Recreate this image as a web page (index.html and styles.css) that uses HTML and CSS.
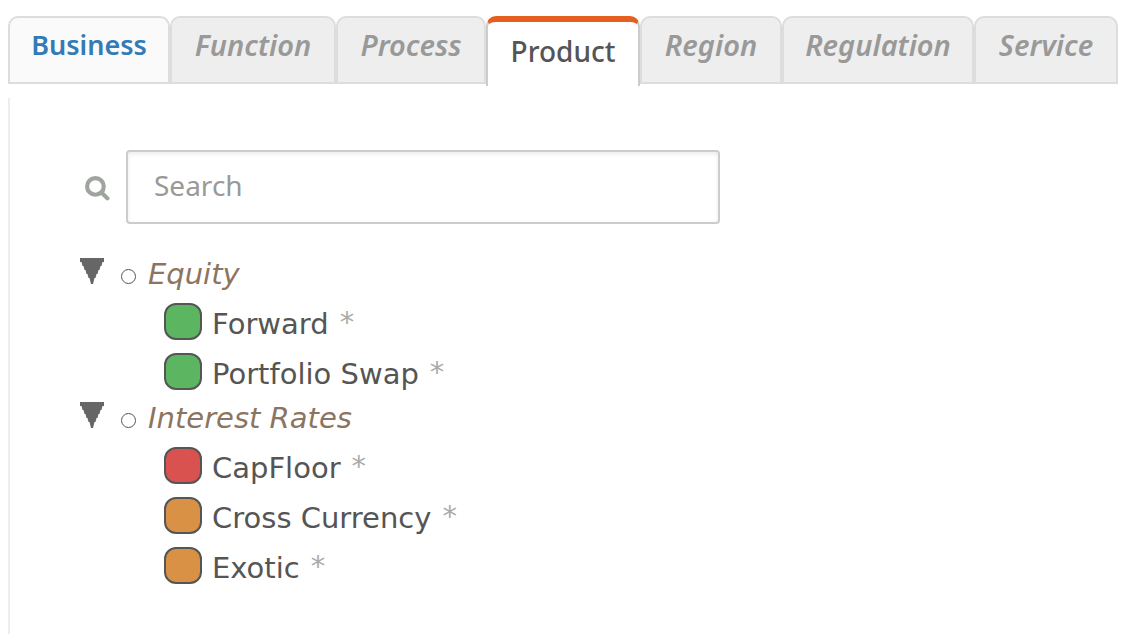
FILE: index.html
```html
<!DOCTYPE html>
<html lang="en">
<head>
<meta charset="utf-8">
<title>Product</title>
<link rel="stylesheet" href="styles.css">
</head>
<body>
<nav class="tabs">
  <a class="tab tab-link" href="#business">Business</a>
  <a class="tab" href="#function">Function</a>
  <a class="tab" href="#process">Process</a>
  <a class="tab tab-active" href="#product" aria-current="page">Product</a>
  <a class="tab" href="#region">Region</a>
  <a class="tab" href="#regulation">Regulation</a>
  <a class="tab" href="#service">Service</a>
</nav>
<main class="panel">
  <div class="search">
    <label class="search-label" for="search" aria-label="Search">
      <svg class="search-icon" viewBox="0 0 24 24" aria-hidden="true"><circle cx="10" cy="10" r="8"/><path d="M16 16L21.500 21.500"/></svg>
    </label>
    <input class="search-input" id="search" type="text" placeholder="Search">
  </div>
  <ul class="tree">
    <li>
      <div class="group">
        <button class="toggle" type="button" aria-label="Collapse Equity" aria-expanded="true"><svg class="arrow" viewBox="0 0 24 26" aria-hidden="true"><path d="M0 0H24V4H22.500L21.500 8H20.500L19.500 12H18.500L17.500 16H16.500L15.500 20H14.500L13 26H11L9.500 20H8.500L7.500 16H6.500L5.500 12H4.500L3.500 8H2.500L1.500 4H0Z"/></svg></button>
        <span class="bullet"></span>
        <span class="group-name">Equity</span>
      </div>
      <ul class="leaves">
        <li class="leaf"><span class="swatch green"></span><span>Forward</span><span class="mark">*</span></li>
        <li class="leaf"><span class="swatch green"></span><span>Portfolio Swap</span><span class="mark">*</span></li>
      </ul>
    </li>
    <li>
      <div class="group">
        <button class="toggle" type="button" aria-label="Collapse Interest Rates" aria-expanded="true"><svg class="arrow" viewBox="0 0 24 26" aria-hidden="true"><path d="M0 0H24V4H22.500L21.500 8H20.500L19.500 12H18.500L17.500 16H16.500L15.500 20H14.500L13 26H11L9.500 20H8.500L7.500 16H6.500L5.500 12H4.500L3.500 8H2.500L1.500 4H0Z"/></svg></button>
        <span class="bullet"></span>
        <span class="group-name">Interest Rates</span>
      </div>
      <ul class="leaves">
        <li class="leaf"><span class="swatch red"></span><span>CapFloor</span><span class="mark">*</span></li>
        <li class="leaf"><span class="swatch orange"></span><span>Cross Currency</span><span class="mark">*</span></li>
        <li class="leaf"><span class="swatch orange"></span><span>Exotic</span><span class="mark">*</span></li>
      </ul>
    </li>
  </ul>
</main>
</body>
</html>
```
FILE: styles.css
```css
* { box-sizing: border-box; }
body {
  margin: 0;
  min-height: 100vh;
  padding: 16px 22px 0 8px;
  display: flex;
  flex-direction: column;
  background: #fff;
  color: #555;
  font-family: "Noto Sans", "Open Sans", sans-serif;
  font-size: 28px;
}
ul { list-style: none; margin: 0; padding: 0; }
.tabs {
  display: grid;
  grid-template-columns: 162fr 166fr 150fr 154fr 142fr 192fr 144fr;
  align-items: start;
  height: 70px;
}
.tab {
  height: 68px;
  padding-top: 7px;
  border: 2px solid #ddd;
  border-radius: 10px 10px 0 0;
  background: #eee;
  color: #999;
  font-size: 29px;
  font-weight: 600;
  font-style: italic;
  line-height: 40px;
  text-align: center;
  text-decoration: none;
}
.tab-link {
  background: #fafafa;
  color: #337ab7;
  font-size: 27px;
  font-style: normal;
}
.tab-active {
  height: 70px;
  padding-top: 9px;
  border-color: #e56020 #ccc transparent;
  border-width: 6px 2px 0;
  background: #fff;
  color: #555;
  font-size: 28px;
  font-style: normal;
  font-weight: 500;
}
.panel {
  flex: 1;
  margin-top: 12px;
  padding: 52px 0 40px 70px;
  border-left: 2px solid #eee;
}
.search { display: flex; align-items: center; }
.search-label { width: 46px; padding: 2px 0 0 5px; }
.search-icon {
  display: block;
  width: 25px;
  height: 25px;
  fill: none;
  stroke: #9da59d;
  stroke-width: 4;
  stroke-linecap: round;
}
.search-input {
  flex: 0 1 594px;
  min-width: 0;
  height: 74px;
  padding: 0 26px 4px;
  border: 2px solid #ccc;
  border-radius: 4px;
  box-shadow: inset 0 2px 4px rgba(0, 0, 0, 0.08);
  color: #555;
  font: inherit;
}
.search-input::placeholder { color: #999; opacity: 1; }
.tree {
  margin-top: 31px;
  font-family: "DejaVu Sans", Verdana, sans-serif;
  font-size: 29px;
}
.group {
  display: flex;
  align-items: center;
  height: 44px;
  padding-bottom: 6px;
}
.toggle {
  padding: 0 0 6px;
  border: 0;
  background: none;
  line-height: 0;
}
.arrow { width: 24px; height: 26px; fill: #666; }
.bullet {
  width: 15px;
  height: 15px;
  margin: 4px 12px 0 17px;
  border: 1px solid #555;
  border-radius: 50%;
}
.group-name { color: #8c7560; font-style: italic; }
.leaves { padding-left: 84px; }
.leaf { display: flex; align-items: center; height: 50px; }
.swatch {
  width: 38px;
  height: 37px;
  margin: 0 10px 5px 0;
  border: 2px solid #555;
  border-radius: 12px;
}
.green { background: #5cb560; }
.red { background: #d9524f; }
.orange { background: #d99145; }
.mark { margin: 0 0 4px 11px; color: #aaa; }
```
